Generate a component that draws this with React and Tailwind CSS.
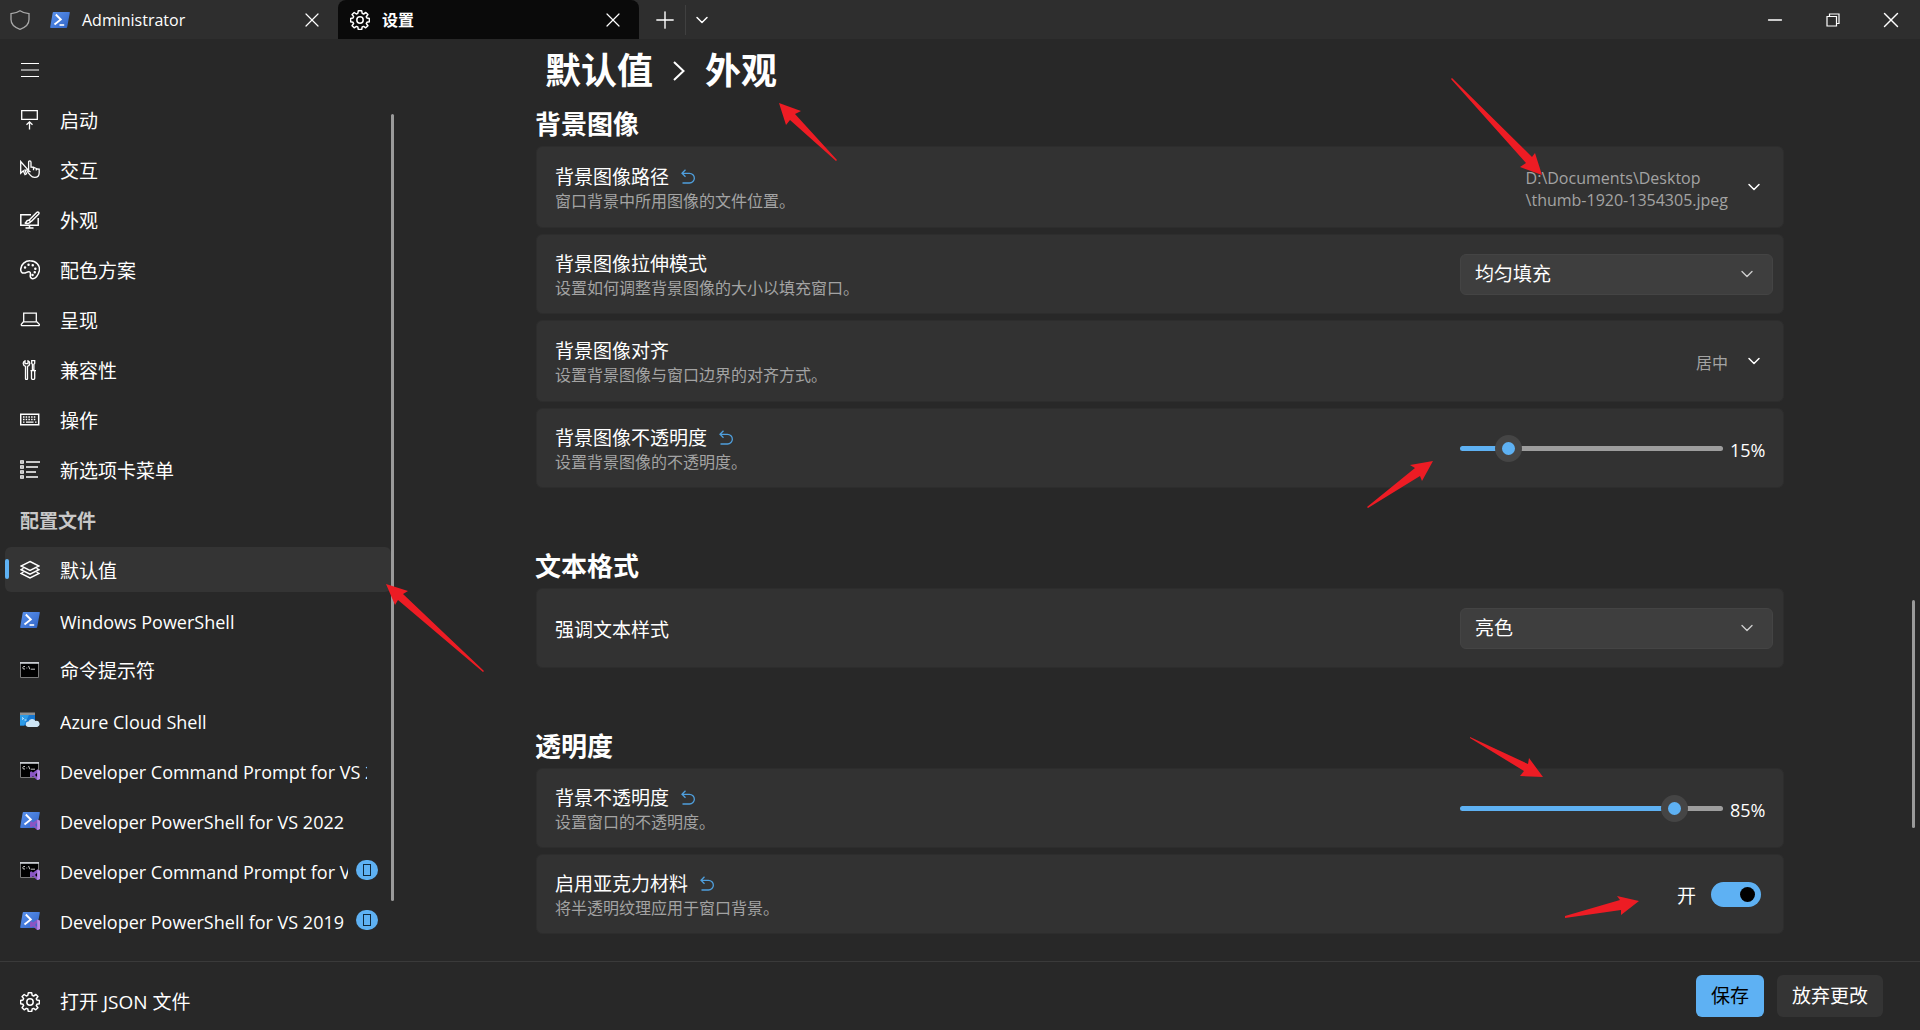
import React, { useState } from 'react';
import { ChevronDown, X, Plus, Minus } from 'lucide-react';

const PowerShellIcon = ({ vs }) => (
  <svg viewBox="0 0 20 20" className="w-5 h-5 shrink-0">
    <defs>
      <linearGradient id="ps" x1="0" y1="0" x2="1" y2="1">
        <stop offset="0" stopColor="#5c94ee" />
        <stop offset="1" stopColor="#2f62c4" />
      </linearGradient>
    </defs>
    <path d="M3.6 2h15.600q.8 0 .6.800l-2.600 14.200q-.2.900-1.100.900H.900q-.9 0-.7-.9L2.700 2.800q.1-.8.900-.8z" fill="url(#ps)" />
    <path d="M5.800 4.500l5 5-6.300 5" fill="none" stroke="#fff" strokeWidth="1.900" />
    {!vs && <path d="M9.500 15h4.700" stroke="#fff" strokeWidth="1.600" />}
    {vs && <VsMark />}
  </svg>
);

const VsMark = () => (
  <>
    <path d="M17.200 9.500l2.800 1.300v8.200l-2.800 1.200-4.200-4-1.600 1.400-1.400-.7v-5l1.400-.7 1.600 1.400zM17.200 12.700l-2.200 2.200 2.200 2.200z" fill="#8a55c4" fillRule="evenodd" />
    <path d="M17.200 9.500l2.800 1.300v8.200l-2.800 1.200z" fill="#b68ae6" />
  </>
);

const CmdIcon = ({ vs }) => (
  <svg viewBox="0 0 20 20" className="w-5 h-5 shrink-0">
    <path d="M.5 2.500h18v15H.5z" fill="#000" stroke="#7a7a7a" />
    <path d="M0 2h19v1.800H0z" fill="#c9ccd1" />
    <path d="M5 6.500q-2-.5-2.200 1.200T5 9M6.800 7v.4M6.800 8.600v.4M8.500 6l1.500 3.400" fill="none" stroke="#ddd" strokeWidth=".9" />
    <path d="M11 9.200h4" stroke="#ddd" strokeWidth=".9" />
    {vs && <VsMark />}
  </svg>
);

const AzureIcon = () => (
  <svg viewBox="0 0 20 20" className="w-5 h-5 shrink-0">
    <path d="M0 2.500h15v3H0z" fill="#8f8f8f" />
    <path d="M0 5h15v10.500H0z" fill="#1577d1" />
    <path d="M0 5h9l-5 10.500H0z" fill="#2c9be8" />
    <path d="M2 7.500l1.500 1L2 9.500M4.500 10h2" stroke="#fff" strokeWidth=".8" fill="none" />
    <path d="M8.500 17a2.700 2.700 0 0 1 0-5.400A3.800 3.800 0 0 1 15.500 11a3 3 0 0 1 1.800 6z" fill="#cfe6f5" />
  </svg>
);

const Line = ({ children, className = 'w-5 h-5 shrink-0', width = 1.3 }) => (
  <svg viewBox="0 0 20 20" className={className} fill="none" stroke="currentColor" strokeWidth={width}>{children}</svg>
);

const StartupIcon = () => (
  <Line><path d="M1.700.7h15.600v8.600H1.700zM9.500 19.500v-7.500M6.500 14.800l3-3 3 3" /></Line>
);

const InteractIcon = () => (
  <Line>
    <path d="M.7 1.500v11.800l2.600-2.500 1.700 3.700 1.500-.8-1.600-3.600h3.300z" />
    <path d="M8.600 10V2.200q0-1.300 1.200-1.300t1.200 1.300V7q2.500 0 4.200 1t4 1.200v3.600q0 4.600-4.500 4.600-2.600 0-4.200-2l-3-3.600 1.100-.9 2 1.100M13.500 7.500v2.700M16.300 8.200v2.300" />
  </Line>
);

const AppearanceIcon = () => (
  <Line width={1.5}>
    <path d="M11 4.700H.8v10.600h17.400V8M5.500 18h8M9.500 15.500V18" />
    <path d="M9 10.200l7.700-7.700q1-1 1.900-.2t-.1 1.900l-7.500 7.500M9 10.200q-2-.3-2.500 1.200T4.800 13q3.700 1.200 5.200-.4.900-1-1-2.400z" />
  </Line>
);

const PaletteIcon = () => (
  <Line width={1.5}>
    <path d="M10 .8q4.500 0 7.300 3t2 7.200q-.8 3.400-2.800 5.800t-4.700 1.700q-2-.8-1.500-3.300.5-2.700-.7-3.300t-3 .4T2.400 13Q.6 12 .7 9.500.8 5.500 3.700 3.100T10 .8z" />
    <path d="M5 7.500h.1M8.500 4.800h.1M12.700 5.300h.1M15.300 8.800h.1M14.700 12.300h.1M12.500 15h.1" strokeWidth="2.400" strokeLinecap="round" />
  </Line>
);

const LaptopIcon = () => (
  <Line><path d="M3.700 3.200h12.600v8.600H3.700zM3.500 11.800l-2.200 2.500q-.3 1.400 1 1.400h16q1.300 0 1-1.400l-2.500-2.500" /></Line>
);

const ToolsIcon = () => (
  <Line>
    <path d="M5.500 6.300A2.900 2.900 0 0 1 5 .8v2.800h3V.8a2.900 2.900 0 0 1-.5 5.500v12.500q0 .7-1 .7t-1-.7z" />
    <path d="M11.700.6h3v2.700l-.8 1V10h-1.500V4.300l-.7-1zM10.500 10.600h5.500M11.500 10.800v7.500q0 1.200 1.600 1.200t1.600-1.200v-7.500" />
  </Line>
);

const KeyboardIcon = () => (
  <Line>
    <path d="M.7 4.200h18v10.600H.7z" strokeWidth="1.500" />
    <path d="M3 7h13.500M3 9.500h13.500" strokeDasharray="1.500 1.200" />
    <path d="M3 12.200h1.500M6 12.200h7.500M15 12.200h1.500" />
  </Line>
);

const ListIcon = () => (
  <Line>
    <path d="M.8.8h2.400v2.400H.8zM.8 5.800h2.400v2.400H.8zM.8 10.800h2.400v2.400H.8zM.8 15.800h2.400v2.400H.8z" />
    <path d="M6 2h14M6 7h12M6 12h10M6 17h12" />
  </Line>
);

const LayersIcon = () => (
  <Line width={1.4}>
    <path d="M10 1.500l9 4.500-9 4.500L1 6zM3.500 8.300L1 9.700l9 4.500 9-4.500-2.500-1.400M3.500 12L1 13.400l9 4.500 9-4.500-2.500-1.400" />
  </Line>
);

const GearIcon = () => (
  <Line width={1.5}>
    <path d="M8.300.8h3.400l.5 2.600 1.400.6 2.300-1.500 2 2L16.300 6.800l.6 1.200 2.500.5v3.200l-2.500.5-.6 1.300 1.600 2.200-2.200 2.100-2.100-1.400-1.400.6-.5 2.400H8.300l-.5-2.400-1.400-.6-2.200 1.400-2.100-2.100 1.500-2.200-.6-1.300-2.400-.5V8.500L3 8l.6-1.300L2.100 4.500l2.100-2L6.400 4l1.400-.6z" strokeLinejoin="round" />
    <circle cx="10" cy="10" r="3.200" />
  </Line>
);

const ShieldIcon = () => (
  <Line className="w-5 h-5 shrink-0 text-[#a8a8a8]">
    <path d="M10 .8q4 2.800 9 2.800v6q0 6.800-9 9.700-9-2.900-9-9.700v-6Q6 3.600 10 .8z" />
  </Line>
);

const menu = [
  { label: '启动', icon: StartupIcon },
  { label: '交互', icon: InteractIcon },
  { label: '外观', icon: AppearanceIcon },
  { label: '配色方案', icon: PaletteIcon },
  { label: '呈现', icon: LaptopIcon },
  { label: '兼容性', icon: ToolsIcon },
  { label: '操作', icon: KeyboardIcon },
  { label: '新选项卡菜单', icon: ListIcon },
];

const profiles = [
  { label: '默认值', icon: LayersIcon, active: true },
  { label: 'Windows PowerShell', icon: PowerShellIcon, latin: true },
  { label: '命令提示符', icon: CmdIcon },
  { label: 'Azure Cloud Shell', icon: AzureIcon, latin: true },
  { label: 'Developer Command Prompt for VS 2022', icon: CmdIcon, latin: true, vs: true },
  { label: 'Developer PowerShell for VS 2022', icon: PowerShellIcon, latin: true, vs: true },
  { label: 'Developer Command Prompt for VS 2019', icon: CmdIcon, latin: true, vs: true, badge: true },
  { label: 'Developer PowerShell for VS 2019', icon: PowerShellIcon, latin: true, vs: true, badge: true },
];

const NavItem = ({ item }) => {
  const Icon = item.icon;
  return (
    <li>
      <button className={`relative flex items-center w-full h-[45px] pl-[15px] rounded-md text-left ${item.active ? 'bg-[#343434]' : ''}`}>
        {item.active && <span className="absolute left-0 top-3 h-5 w-1 rounded-full bg-[#5eb1f3]" />}
        <Icon vs={item.vs} />
        <span className={`flex-1 ml-5 pt-1 overflow-hidden whitespace-nowrap ${item.latin ? 'text-lg' : ''} ${item.badge ? 'mr-2' : 'mr-6'}`}>{item.label}</span>
        {item.badge && (
          <span className="mr-[13px] flex items-center justify-center w-[22px] h-5 rounded-full bg-[#5eb1f3]">
            <span className="w-2 h-3 border border-[#10293c]" />
          </span>
        )}
      </button>
    </li>
  );
};

const ResetButton = () => (
  <button aria-label="重置" className="text-[#4f9fdd]">
    <svg viewBox="0 0 14 16" className="w-3.5 h-4" fill="none" stroke="currentColor" strokeWidth="1.300">
      <path d="M4.500.8L1 4.300l3.500 3.500M1 4.300h7.500a4.800 4.800 0 0 1 0 9.700H1.500" />
    </svg>
  </button>
);

const Card = ({ id, title, desc, reset, tall, children }) => (
  <div className={`flex items-center justify-between rounded-md bg-[#323232] border border-[#2d2d2d] pl-[18px] pr-2.5 ${tall ? 'min-h-[82px]' : 'min-h-20'}`}>
    <div className="pt-1">
      <div className="flex items-center gap-3 leading-6">
        <label htmlFor={id}>{title}</label>
        {reset && <ResetButton />}
      </div>
      {desc && <p className="text-base leading-6 text-[#a3a3a3]">{desc}</p>}
    </div>
    {children}
  </div>
);

const Section = ({ title, children }) => (
  <section>
    <h2 className="text-[26px] leading-9 font-bold mb-1">{title}</h2>
    <div className="flex flex-col gap-1.5 px-px">{children}</div>
  </section>
);

const Select = ({ id, options }) => (
  <div className="relative w-[313px]">
    <select id={id} className="w-full h-[41px] pl-3.5 pr-10 rounded-md bg-[#3e3e3e] border border-[#444] appearance-none outline-none">
      {options.map(o => <option key={o}>{o}</option>)}
    </select>
    <ChevronDown className="absolute right-4 top-2.5 w-5 h-5 text-[#cfcfcf] pointer-events-none" strokeWidth={1.6} />
  </div>
);

const Slider = ({ id, initial }) => {
  const [value, setValue] = useState(initial);
  const stop = `calc(13px + (100% - 26px) * ${value / 100})`;
  return (
    <div className="flex items-center gap-[7px] w-[313px]">
      <input
        id={id}
        type="range"
        min="0"
        max="100"
        value={value}
        onChange={e => setValue(Number(e.target.value))}
        style={{ background: `linear-gradient(to right, #5eb1f3 ${stop}, #9d9d9d ${stop})` }}
        className="w-[263px] h-[5px] rounded-full appearance-none [&::-webkit-slider-thumb]:appearance-none [&::-webkit-slider-thumb]:w-[27px] [&::-webkit-slider-thumb]:h-[27px] [&::-webkit-slider-thumb]:rounded-full [&::-webkit-slider-thumb]:border-[7px] [&::-webkit-slider-thumb]:border-[#454545] [&::-webkit-slider-thumb]:bg-[#5eb1f3]"
      />
      <output htmlFor={id} className="pt-1 text-lg">{value}%</output>
    </div>
  );
};

const arrows = [
  '386,584 408,591 403,594 484,671 483,672 398,600 395,605',
  '779,103 801,111 795,114 837,160 836,161 790,120 786,125',
  '1542,175 1535,153 1532,157 1452,78 1451,79 1526,163 1520,167',
  '1433,461 1410,465 1415,468 1367,507 1368,508 1420,476 1422,481',
  '1543,777 1529,758 1528,764 1470,737 1470,738 1524,771 1520,776',
  '1639,901 1617,896 1620,900 1565,916 1565,918 1621,910 1621,915',
];

const App = () => {
  const [acrylic, setAcrylic] = useState(true);

  return (
    <div className="relative flex flex-col h-screen overflow-hidden bg-[#282828] text-white text-[19px] font-['Open_Sans','Noto_Sans_CJK_SC',sans-serif]">
      <header className="flex items-center h-[39px] shrink-0 bg-[#2e2e2e] text-base">
        <div className="flex items-center w-[338px] pl-2.5 pr-3.5">
          <ShieldIcon />
          <button className="flex flex-1 items-center gap-3 ml-5"><PowerShellIcon />Administrator</button>
          <button aria-label="关闭选项卡"><X className="w-6 h-6" strokeWidth={1.2} /></button>
        </div>
        <div className="flex items-center w-[301px] h-full pl-3 pr-3.5 rounded-t-lg bg-[#0a0a0a]">
          <button className="flex flex-1 items-center gap-3 font-bold"><GearIcon />设置</button>
          <button aria-label="关闭选项卡"><X className="w-6 h-6" strokeWidth={1.2} /></button>
        </div>
        <button aria-label="新建选项卡" className="ml-3"><Plus className="w-7 h-7" strokeWidth={1.2} /></button>
        <span className="w-px h-[30px] ml-1.5 mr-1.5 bg-[#404040]" />
        <button aria-label="选项卡菜单"><ChevronDown className="w-5 h-5" strokeWidth={1.8} /></button>
        <div className="flex items-center h-full ml-auto">
          <button aria-label="最小化" className="flex items-center justify-center w-[58px]"><Minus className="w-[22px] h-[22px]" strokeWidth={1.6} /></button>
          <button aria-label="还原" className="flex items-center justify-center w-[58px]">
            <svg viewBox="0 0 14 14" className="w-3.5 h-3.5" fill="none" stroke="currentColor" strokeWidth="1.200">
              <path d="M1 3.500h9.500V13H1zM3.500 3.500V1H13v9.500h-2.500" />
            </svg>
          </button>
          <button aria-label="关闭" className="flex items-center justify-center w-[58px]"><X className="w-[26px] h-[26px]" strokeWidth={1.3} /></button>
        </div>
      </header>

      <div className="flex flex-1 min-h-0">
        <aside className="flex flex-col w-[400px] shrink-0 pl-[5px] pr-1.5">
          <button aria-label="菜单" className="flex items-center h-[58px] pl-4 pt-1">
            <svg viewBox="0 0 18 14" className="w-[18px] h-3.5" stroke="currentColor"><path d="M0 .5h18M0 7h18M0 13.500h18" /></svg>
          </button>
          <div className="flex flex-1 min-h-0">
            <nav className="flex-1 min-w-0">
              <ul className="flex flex-col gap-[5px]">
                {menu.map(item => <NavItem key={item.label} item={item} />)}
                <li className="flex items-center h-[45px] pl-[15px] pt-1 font-bold text-[#c8c8c8]">配置文件</li>
                {profiles.map(item => <NavItem key={item.label} item={item} />)}
              </ul>
            </nav>
            <div className="w-[3px] mt-[17px] mb-[60px] rounded-full bg-[#9a9a9a]" />
          </div>
        </aside>

        <main className="flex-1 min-w-0 flex">
          <div className="w-full max-w-[1250px] mx-auto">
            <h1 className="flex items-center gap-5 h-[67px] pl-2.5 pb-1 text-[36px] font-bold">
              默认值
              <svg viewBox="0 0 12 20" className="w-3 h-5" fill="none" stroke="currentColor" strokeWidth="2"><path d="M1 1l9.500 9L1 19" /></svg>
              外观
            </h1>
            <div className="flex flex-col gap-[60px]">
              <Section title="背景图像">
                <Card id="path" title="背景图像路径" desc="窗口背景中所用图像的文件位置。" reset tall>
                  <button id="path" className="flex items-center gap-4 pr-[9px] text-left">
                    <span className="pt-1 text-base leading-[22px] text-[#a3a3a3]">D:\Documents\Desktop<br />\thumb-1920-1354305.jpeg</span>
                    <ChevronDown className="w-5 h-5" strokeWidth={1.8} />
                  </button>
                </Card>
                <Card id="stretch" title="背景图像拉伸模式" desc="设置如何调整背景图像的大小以填充窗口。">
                  <Select id="stretch" options={['均匀填充', '填充', '无']} />
                </Card>
                <Card id="align" title="背景图像对齐" desc="设置背景图像与窗口边界的对齐方式。" tall>
                  <button id="align" className="flex items-center gap-4 pr-[9px]">
                    <span className="pt-1 text-base text-[#a3a3a3]">居中</span>
                    <ChevronDown className="w-5 h-5" strokeWidth={1.8} />
                  </button>
                </Card>
                <Card id="image-opacity" title="背景图像不透明度" desc="设置背景图像的不透明度。" reset>
                  <Slider id="image-opacity" initial={15} />
                </Card>
              </Section>

              <Section title="文本格式">
                <Card id="intense" title="强调文本样式">
                  <Select id="intense" options={['亮色', '粗体']} />
                </Card>
              </Section>

              <Section title="透明度">
                <Card id="opacity" title="背景不透明度" desc="设置窗口的不透明度。" reset>
                  <Slider id="opacity" initial={85} />
                </Card>
                <Card id="acrylic" title="启用亚克力材料" desc="将半透明纹理应用于窗口背景。" reset>
                  <div className="flex items-center gap-[15px] pr-3">
                    <span className="pt-1">{acrylic ? '开' : '关'}</span>
                    <input
                      id="acrylic"
                      type="checkbox"
                      role="switch"
                      checked={acrylic}
                      onChange={e => setAcrylic(e.target.checked)}
                      className="flex items-center w-[50px] h-[25px] px-[6px] rounded-full appearance-none bg-[#9d9d9d] checked:bg-[#5eb1f3] checked:justify-end before:w-[15px] before:h-[15px] before:rounded-full before:bg-black"
                    />
                  </div>
                </Card>
              </Section>
            </div>
          </div>
        </main>
        <div className="w-[3px] h-[228px] mt-[561px] mr-[5px] -ml-2 rounded-full bg-[#9a9a9a]" />
      </div>

      <footer className="flex items-center justify-between h-[69px] shrink-0 pl-5 pr-[37px] border-t border-[#3a3a3a]">
        <button className="flex items-center gap-5 mt-3"><GearIcon />打开 JSON 文件</button>
        <div className="flex gap-[13px]">
          <button className="h-[42px] px-[15px] rounded-md bg-[#5eb1f3] text-black">保存</button>
          <button className="h-[42px] px-[15px] rounded-md bg-[#343434]">放弃更改</button>
        </div>
      </footer>

      <svg viewBox="0 0 1920 1030" className="absolute left-0 top-0 w-[1920px] h-[1030px] max-w-none pointer-events-none" fill="#ed1c24">
        {arrows.map(points => <polygon key={points} points={points} />)}
      </svg>
    </div>
  );
};

export default App;
